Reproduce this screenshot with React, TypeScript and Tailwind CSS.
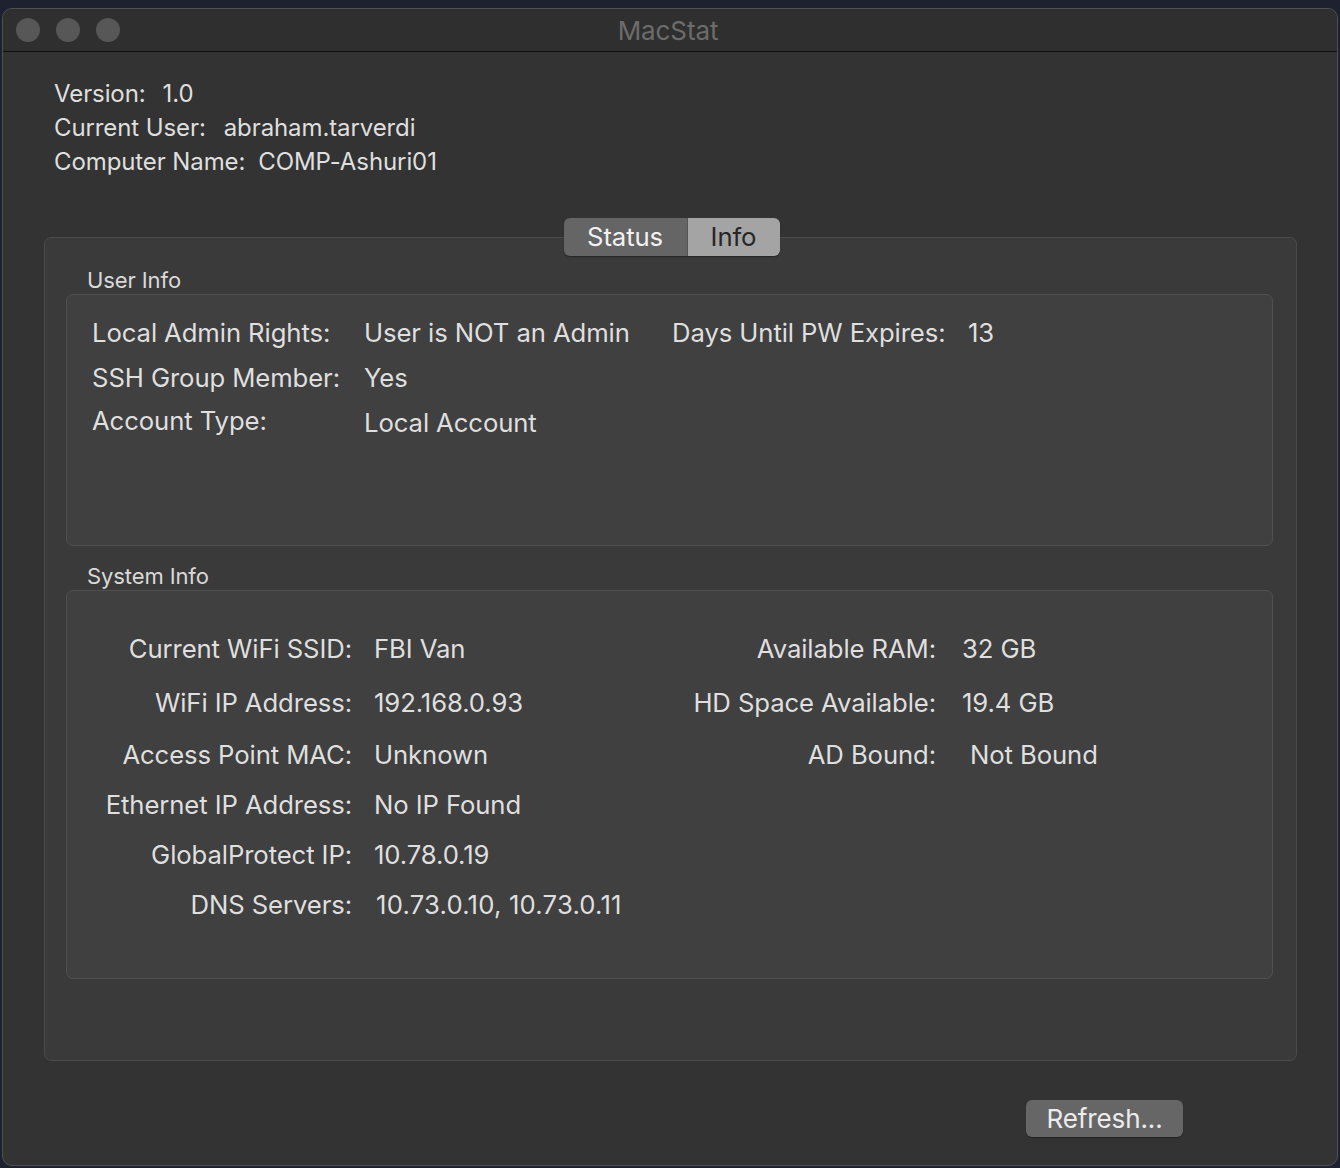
import React from "react";

const font = { fontFamily: "Inter, 'Noto Sans', 'Liberation Sans', sans-serif" };

function SysRow({
  label,
  value,
  rLabel,
  rValue,
  mt,
  vShift = "",
  rShift = "",
}: {
  label: string;
  value: string;
  rLabel?: string;
  rValue?: string;
  mt: string;
  vShift?: string;
  rShift?: string;
}) {
  return (
    <div className={`grid grid-cols-[285px_328px_256px_auto] h-[30px] items-center ${mt}`}>
      <div className="text-right whitespace-nowrap">{label}</div>
      <div className={`pl-[22px] whitespace-nowrap ${vShift}`}>{value}</div>
      <div className="text-right whitespace-nowrap">{rLabel ?? ""}</div>
      <div className={`pl-[26px] whitespace-nowrap ${rShift}`}>{rValue ?? ""}</div>
    </div>
  );
}

export default function App() {
  return (
    <div
      className="w-[1340px] h-[1168px] bg-[#1d2130] pt-[8px] px-[2px] pb-[2px]"
      style={font}
    >
      <div className="h-full flex flex-col rounded-[10px] border border-[#505050] bg-[#333333] overflow-hidden text-[#dfdfdf] text-[24px] tracking-[-0.1px]">
        {/* title bar */}
        <div className="h-[43px] shrink-0 bg-[#2f2f2f] border-b border-[#0f0f0f] grid grid-cols-[1fr_auto_1fr] items-center">
          <div className="flex items-center gap-[16px] pl-[13px]">
            <div className="w-[24px] h-[24px] rounded-full bg-[#575757]" />
            <div className="w-[24px] h-[24px] rounded-full bg-[#575757]" />
            <div className="w-[24px] h-[24px] rounded-full bg-[#575757]" />
          </div>
          <div className="text-[#6c6c6c] text-[26px] leading-none pr-[4px] pt-[2px]">MacStat</div>
          <div />
        </div>

        {/* header info */}
        <div className="pl-[51px] pt-[25px] leading-[34px]">
          <div>
            Version:<span className="ml-[17px]">1.0</span>
          </div>
          <div>
            Current User:<span className="ml-[18px]">abraham.tarverdi</span>
          </div>
          <div>
            Computer Name:<span className="ml-[13px]">COMP-Ashuri01</span>
          </div>
        </div>

        {/* tab view */}
        <div className="mt-[39px] ml-[41px] mr-[40px] flex flex-col items-center text-[25.7px]">
          <div className="relative z-10 flex h-[38px] rounded-[6px] overflow-hidden shadow-[0_1px_1px_rgba(0,0,0,0.35)] ml-[2px]">
            <div className="w-[124px] bg-[#656565] text-[#f2f2f2] flex items-center justify-center border-r border-[#555]">
              Status
            </div>
            <div className="w-[92px] bg-[#a4a4a4] text-[#262626] flex items-center justify-center">
              Info
            </div>
          </div>
          <div className="-mt-[19px] w-full h-[824px] rounded-[7px] border border-[#4b4b4b] bg-[#3a3a3a] px-[21px] pt-[30px]">
            <div className="pl-[21px] text-[22px] leading-[26px] text-[#d9d9d9] -mt-[1px] mb-[1px]">User Info</div>
            <div className="h-[252px] rounded-[7px] border border-[#505050] bg-[#404040] pl-[25px] pt-[19px] mr-[2px]">
              <div className="grid grid-cols-[272px_308px_296px_auto] h-[32px] items-center">
                <div className="whitespace-nowrap">Local Admin Rights:</div>
                <div className="whitespace-nowrap">User is NOT an Admin</div>
                <div className="whitespace-nowrap">Days Until PW Expires:</div>
                <div>13</div>
              </div>
              <div className="grid grid-cols-[272px_auto] h-[32px] items-center mt-[13px]">
                <div>SSH Group Member:</div>
                <div>Yes</div>
              </div>
              <div className="grid grid-cols-[272px_auto] h-[32px] items-center mt-[11px]">
                <div className="-mt-[2px]">Account Type:</div>
                <div className="mt-[2px]">Local Account</div>
              </div>
            </div>

            <div className="pl-[21px] text-[22px] leading-[26px] text-[#d9d9d9] mt-[17px] mb-[1px]">System Info</div>
            <div className="h-[389px] rounded-[7px] border border-[#505050] bg-[#404040] pt-[39px] mr-[2px]">
              <SysRow label="Current WiFi SSID:" value="FBI Van" rLabel="Available RAM:" rValue="32 GB" mt="" />
              <SysRow label="WiFi IP Address:" value="192.168.0.93" rLabel="HD Space Available:" rValue="19.4 GB" mt="mt-[24px]" />
              <SysRow label="Access Point MAC:" value="Unknown" rLabel="AD Bound:" rValue="Not Bound" mt="mt-[22px]" rShift="pl-[34px]" />
              <SysRow label="Ethernet IP Address:" value="No IP Found" mt="mt-[20px]" />
              <SysRow label="GlobalProtect IP:" value="10.78.0.19" mt="mt-[20px]" />
              <SysRow label="DNS Servers:" value="10.73.0.10, 10.73.0.11" mt="mt-[20px]" vShift="pl-[24px] tracking-[0.2px]" />
            </div>
          </div>
        </div>

        {/* refresh */}
        <div className="flex justify-end mr-[154px] mt-[39px]">
          <div className="w-[157px] h-[37px] rounded-[6px] bg-[#666666] text-[#ececec] text-[26px] flex items-center justify-center shadow-[0_1px_1px_rgba(0,0,0,0.35)]">
            Refresh...
          </div>
        </div>
      </div>
    </div>
  );
}
